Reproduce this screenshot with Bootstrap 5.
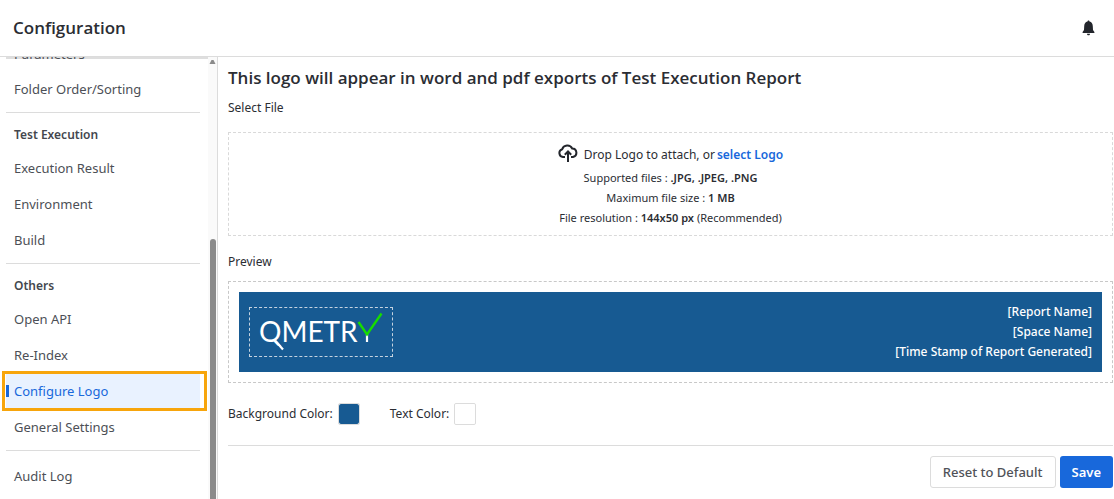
<!DOCTYPE html>
<html lang="en">
<head>
<meta charset="utf-8">
<meta name="viewport" content="width=device-width, initial-scale=1">
<title>Configuration</title>
<link rel="stylesheet" href="https://cdn.jsdelivr.net/npm/bootstrap@5.3.0/dist/css/bootstrap.min.css">
<style>
:root { --line: #dcdcdc; --ink: #2b2d33; --muted: #4c4f56; --accent: #1868db; --brand: #175a92; }
body { font-family: "Noto Sans", "Open Sans", sans-serif; font-size: 12px; line-height: 20px; color: var(--ink); }
a { color: var(--accent); }
h1, h2 { font-family: "Open Sans", "Noto Sans", sans-serif; font-size: 17px; line-height: 24px; font-weight: 600; }
.topbar { height: 57px; border-bottom: 1px solid var(--line); padding: 0 19px 0 13px; }
.workspace { min-height: 0; }
.sidebar { width: 218px; border-right: 1px solid var(--line); }
.menu { padding: 0 8px 0 6px; min-width: 0; }
.menu a { display: block; flex: none; height: 34px; margin: 1px 0; padding: 0 8px; font-size: 13px; line-height: 34px; color: var(--muted); text-decoration: none; }
.menu .clipped { height: 2px; background: #dedede; margin-right: -8px; }
.menu .clipped a { height: 10px; margin: 0; line-height: 10px; }
.menu .first { margin-top: 13px; }
.menu hr, .rule { border-top: 1px solid var(--line); opacity: 1; }
.menu hr { margin: 5px 0 7px; flex: none; }
.menu h3 { margin: 0; padding: 0 8px; font-size: 12px; line-height: 30px; font-weight: 600; color: #44474e; }
.menu .current { background: #e9f2ff; color: var(--accent); }
.menu .current::before { content: ""; position: absolute; left: 0; top: 11px; width: 3px; height: 12px; background: var(--accent); }
.menu .current::after { content: ""; position: absolute; inset: -3px -7px -3px -4px; border: 3px solid #f7a50c; }
.track { width: 9px; background: #fafafa; }
.track .thumb { width: 6px; flex: 60; background: #8b8b8b; border-radius: 3px 3px 0 0; }
.track .space { flex: 40; }
.page-body { padding: 9px 1px 8px 10px; min-width: 0; }
.dropzone { height: 104px; border: 1px dashed #d9d9d9; margin-top: 14px; font-size: 11px; padding-top: 9px; }
.dropzone .lead-line { font-size: 12px; line-height: 26px; }
.dropzone .lead-line svg { margin: 0 6px 4px 0; }
.dropzone .lead-line a { margin-left: 2px; }
.dropzone b, .dropzone a { font-weight: 600; }
.preview { border: 1px dashed #c8c8c8; padding: 10px; margin-top: 9px; }
.banner { background: var(--brand); color: #fff; height: 80px; padding: 0 10px; font-weight: 500; }
.logo-slot { width: 144px; height: 50px; border: 1px dashed #c5d3e0; }
.logo-slot svg { display: block; }
.logo-slot text { font: 28px Lato, sans-serif; }
.swatch { width: 22px; height: 22px; padding: 0; border: 1px solid var(--line); border-radius: 2px; background: #fff; appearance: none; }
.swatch::-webkit-color-swatch-wrapper { padding: 0; }
.swatch::-webkit-color-swatch { border: 0; border-radius: 2px; }
.colors { margin-top: 20px; gap: 30px; }
.colors > div { gap: 5px; }
.rule { margin: 20px 0 10px; }
.btn { height: 32px; padding: 0 11px; font-size: 13px; line-height: 30px; font-weight: 500; border-radius: 3px; }
.btn-reset { padding: 0 12px; border-color: var(--line); color: #505258; background: #fff; }
.btn-save { background: var(--accent); color: #fff; font-weight: 600; }
</style>
</head>
<body class="vh-100 d-flex flex-column overflow-hidden">
<header class="topbar d-flex align-items-center justify-content-between flex-shrink-0">
  <h1 class="m-0">Configuration</h1>
  <button type="button" class="border-0 bg-transparent p-0 d-flex" aria-label="Notifications">
    <svg width="13" height="16" viewBox="0 0 13 16" fill="#23262c"><path d="M6.5 0.5C7.100 0.500 7.500 1 7.500 1.600C9.800 2.100 10.700 3.900 10.800 6.200L11 10L12.400 12V13H0.600V12L2 10L2.200 6.200C2.300 3.900 3.200 2.100 5.500 1.600C5.500 1 5.900 0.500 6.500 0.500Z"/><path d="M5 13.700H8C8 14.700 7.400 15.200 6.500 15.200S5 14.700 5 13.700Z"/></svg>
  </button>
</header>
<div class="workspace d-flex flex-grow-1">
  <aside class="sidebar d-flex flex-shrink-0 overflow-hidden">
    <nav class="menu d-flex flex-column flex-grow-1" aria-label="Configuration sections">
      <div class="clipped d-flex align-items-end flex-shrink-0 overflow-hidden"><a href="#">Parameters</a></div>
      <a href="#" class="first">Folder Order/Sorting</a>
      <hr>
      <h3>Test Execution</h3>
      <a href="#">Execution Result</a>
      <a href="#">Environment</a>
      <a href="#">Build</a>
      <hr>
      <h3>Others</h3>
      <a href="#">Open API</a>
      <a href="#">Re-Index</a>
      <a href="#" class="current position-relative" aria-current="page">Configure Logo</a>
      <a href="#">General Settings</a>
      <hr>
      <a href="#">Audit Log</a>
    </nav>
    <div class="track d-flex flex-column align-items-center flex-shrink-0">
      <svg class="flex-shrink-0" width="7" height="8" viewBox="0 0 7 8"><path d="M0.500 7L2.500 3H4.500L6.500 7Z" fill="#8b8b8b"/></svg>
      <div class="space"></div>
      <div class="thumb"></div>
    </div>
  </aside>
  <main class="page-body flex-grow-1">
    <h2 class="mb-2">This logo will appear in word and pdf exports of Test Execution Report</h2>
    <div>Select File</div>
    <section class="dropzone text-center">
      <div class="lead-line d-flex justify-content-center align-items-center">
        <svg width="20" height="18" viewBox="0 0 20 18" fill="none" stroke="#23262c" stroke-width="2"><path d="M7 13H5A4 4 0 0 1 4.200 5.200A5.400 5.400 0 0 1 14.200 4.500A4.300 4.300 0 0 1 15 13H13M10 18V8M6.800 10.700L10 7.500L13.200 10.700"/></svg>
        <span>Drop Logo to attach, or</span><a href="#" class="text-decoration-none">select Logo</a>
      </div>
      <div>Supported files : <b>.JPG, .JPEG, .PNG</b></div>
      <div>Maximum file size : <b>1 MB</b></div>
      <div>File resolution : <b>144x50 px</b> (Recommended)</div>
    </section>
    <div class="mt-3">Preview</div>
    <section class="preview">
      <div class="banner d-flex align-items-center justify-content-between">
        <div class="logo-slot">
          <svg width="142" height="48" viewBox="0 0 142 48" role="img" aria-label="QMETRY"><text x="9" y="34" fill="#fff">QMETR</text><path d="M25.500 33L33 41.500M117 26V34" fill="none" stroke="#fff" stroke-width="2.200"/><path d="M108.500 14L117 26.500L131.500 5.500" fill="none" stroke="#17dc00" stroke-width="2.400"/></svg>
        </div>
        <div class="text-end">
          <div>[Report Name]</div>
          <div>[Space Name]</div>
          <div>[Time Stamp of Report Generated]</div>
        </div>
      </div>
    </section>
    <div class="colors d-flex">
      <div class="d-flex align-items-center"><label for="bg">Background Color:</label><input id="bg" class="swatch" type="color" value="#175a92"></div>
      <div class="d-flex align-items-center"><label for="fg">Text Color:</label><input id="fg" class="swatch" type="color" value="#ffffff"></div>
    </div>
    <hr class="rule">
    <div class="d-flex justify-content-end gap-1">
      <button type="button" class="btn btn-reset">Reset to Default</button>
      <button type="button" class="btn btn-save">Save</button>
    </div>
  </main>
</div>
<script src="https://cdn.jsdelivr.net/npm/bootstrap@5.3.0/dist/js/bootstrap.bundle.min.js"></script>
</body>
</html>
